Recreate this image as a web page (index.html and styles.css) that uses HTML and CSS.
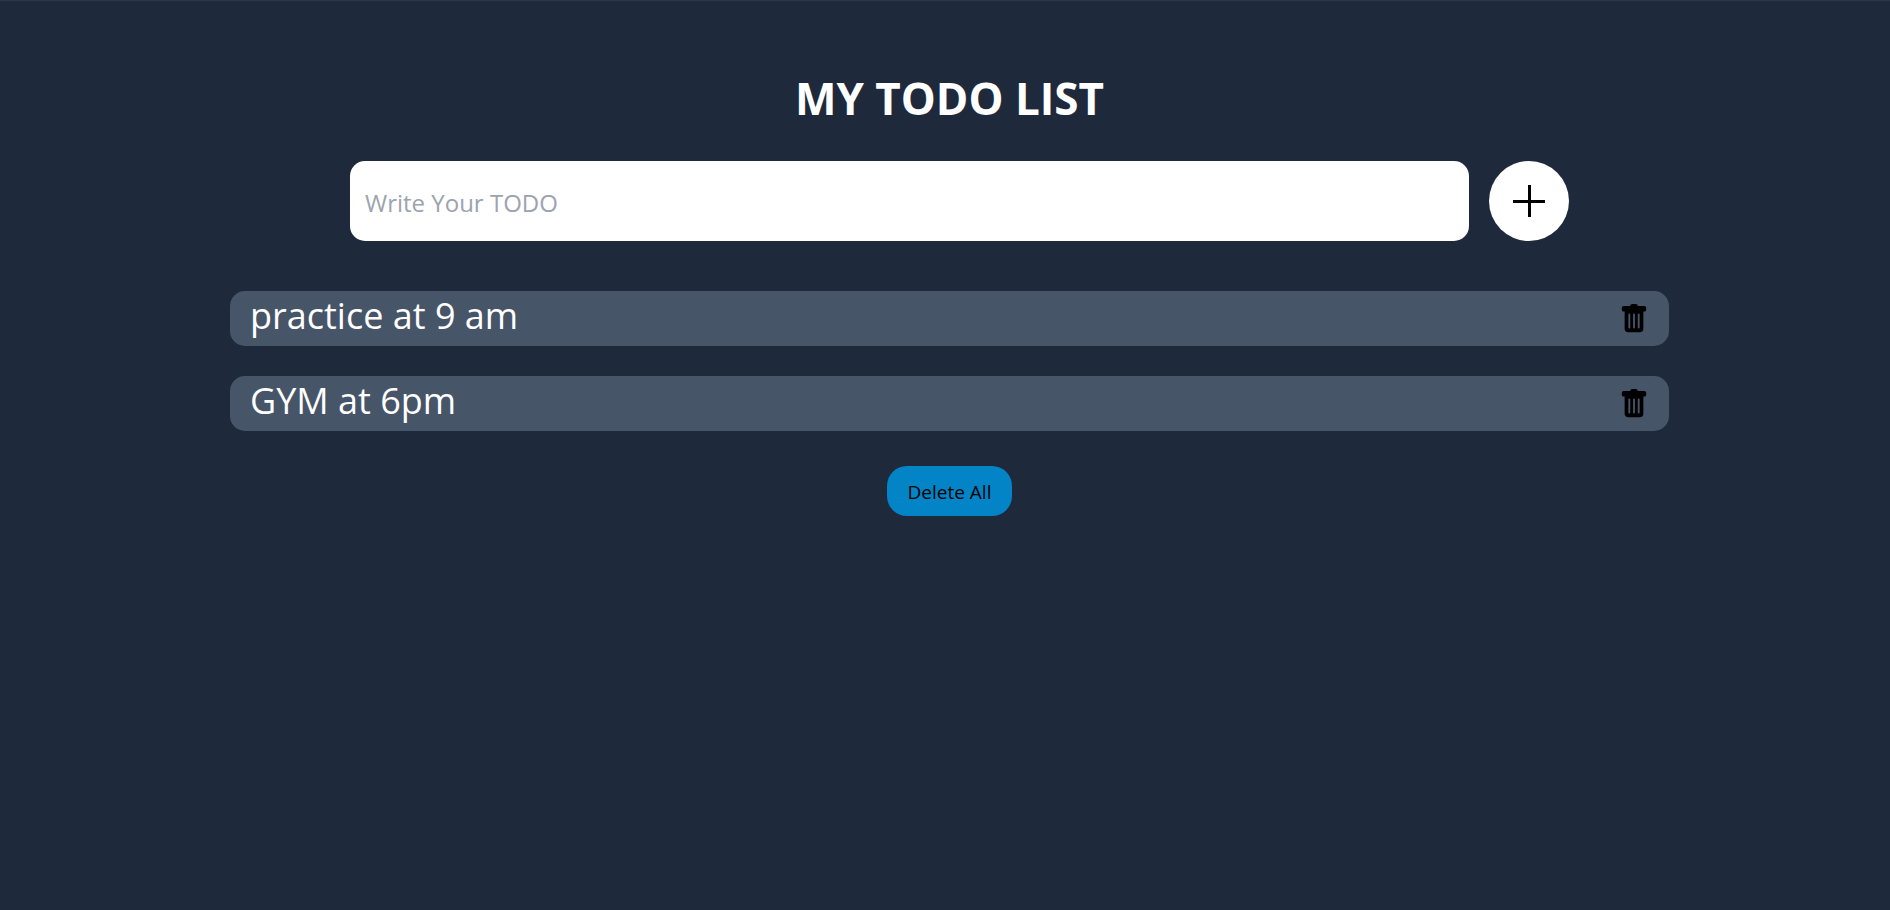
FILE: index.html
```html
<!DOCTYPE html>
<html lang="en">
<head>
<meta charset="utf-8">
<title>My Todo List</title>
<link rel="stylesheet" href="styles.css">
</head>
<body>
<main class="page">
  <h1 class="title">MY TODO LIST</h1>
  <form class="entry">
    <input class="entry-input" type="text" placeholder="Write Your TODO" aria-label="Write your todo">
    <button class="add" type="button" aria-label="Add todo">
      <svg viewBox="0 0 32 32" width="32" height="32" aria-hidden="true"><path d="M15 0h3v15H32v3H18V32h-3V18H0v-3h15z"/></svg>
    </button>
  </form>
  <ul class="list">
    <li class="item">
      <span class="item-text">practice at 9 am</span>
      <button class="remove" type="button" aria-label="Delete practice at 9 am">
        <svg viewBox="0 0 16 16" width="30" height="30" aria-hidden="true"><path d="M2.500 1a1 1 0 0 0-1 1v1a1 1 0 0 0 1 1H3v9a2 2 0 0 0 2 2h6a2 2 0 0 0 2-2V4h.5a1 1 0 0 0 1-1V2a1 1 0 0 0-1-1H10a1 1 0 0 0-1-1H7a1 1 0 0 0-1 1zm3 4a.5.5 0 0 1 .5.5v7a.5.5 0 0 1-1 0v-7a.5.5 0 0 1 .5-.5M8 5a.5.5 0 0 1 .5.5v7a.5.5 0 0 1-1 0v-7A.5.5 0 0 1 8 5m3 .5v7a.5.5 0 0 1-1 0v-7a.5.5 0 0 1 1 0"/></svg>
      </button>
    </li>
    <li class="item">
      <span class="item-text">GYM at 6pm</span>
      <button class="remove" type="button" aria-label="Delete GYM at 6pm">
        <svg viewBox="0 0 16 16" width="30" height="30" aria-hidden="true"><path d="M2.500 1a1 1 0 0 0-1 1v1a1 1 0 0 0 1 1H3v9a2 2 0 0 0 2 2h6a2 2 0 0 0 2-2V4h.5a1 1 0 0 0 1-1V2a1 1 0 0 0-1-1H10a1 1 0 0 0-1-1H7a1 1 0 0 0-1 1zm3 4a.5.5 0 0 1 .5.5v7a.5.5 0 0 1-1 0v-7a.5.5 0 0 1 .5-.5M8 5a.5.5 0 0 1 .5.5v7a.5.5 0 0 1-1 0v-7A.5.5 0 0 1 8 5m3 .5v7a.5.5 0 0 1-1 0v-7a.5.5 0 0 1 1 0"/></svg>
      </button>
    </li>
  </ul>
  <button class="delete-all" type="button">Delete All</button>
</main>
</body>
</html>
```
FILE: styles.css
```css
* {
  box-sizing: border-box;
}

body {
  margin: 0;
  background: #1e293b;
  font-family: "Segoe UI", "Open Sans", sans-serif;
}

button {
  border: 0;
  padding: 0;
  font-family: inherit;
  cursor: pointer;
}

.page {
  display: flex;
  flex-direction: column;
  align-items: center;
  min-height: 100vh;
  padding: 67px 0 40px 9px;
  border-top: 1px solid #2d374b;
}

.title {
  margin: 0 0 33px;
  color: #fff;
  font-size: 44px;
  font-weight: 700;
  line-height: 60px;
}

.entry {
  display: flex;
  gap: 20px;
  width: 100%;
  max-width: 1219px;
  margin-left: 20px;
}

.entry-input {
  flex: 1;
  min-width: 0;
  height: 80px;
  padding: 2px 15px 0;
  border: 0;
  border-radius: 15px;
  background: #fff;
  color: #000;
  font-family: inherit;
  font-size: 24px;
}

.entry-input::placeholder {
  color: #9ca3af;
  opacity: 1;
}

.add {
  display: flex;
  align-items: center;
  justify-content: center;
  width: 80px;
  height: 80px;
  border-radius: 50%;
  background: #fff;
}

.list {
  display: flex;
  flex-direction: column;
  gap: 30px;
  width: 100%;
  max-width: 1439px;
  margin: 50px 0 35px;
  padding: 0;
  list-style: none;
}

.item {
  display: flex;
  align-items: flex-start;
  justify-content: space-between;
  min-height: 55px;
  padding: 0 20px;
  border-radius: 15px;
  background: #475569;
}

.item-text {
  color: #fff;
  font-size: 36px;
  line-height: 50px;
}

.remove {
  display: flex;
  margin-top: 13px;
  background: none;
}

.delete-all {
  min-width: 125px;
  height: 50px;
  padding: 2px 20px 0;
  border-radius: 20px;
  background: #0284c7;
  color: #000;
  font-size: 19px;
}
```
